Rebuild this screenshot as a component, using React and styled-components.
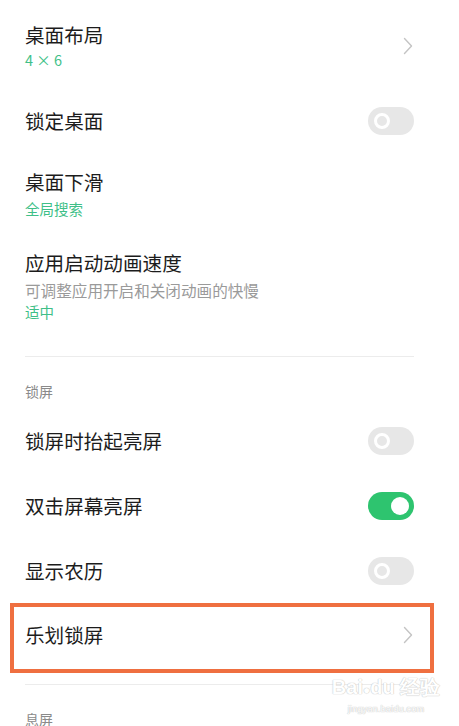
import styled, { createGlobalStyle } from "styled-components";

const GlobalStyle = createGlobalStyle`
  body{
    margin: 0;
    background: #ffffff;
    font-family: "Noto Sans CJK SC", "Noto Sans", sans-serif;
  }
`;

export default function App(){
  return(
    <Page>
      <GlobalStyle/>
      <Item $pt={21} $pb={18}>
        <Texts>
          <Title>桌面布局</Title>
          <Value $gap={1}>4 × 6</Value>
        </Texts>
        <Chevron/>
      </Item>
      <Item $h={65}>
        <Title>锁定桌面</Title>
        <Toggle/>
      </Item>
      <Item $pt={15} $pb={15}>
        <Texts>
          <Title>桌面下滑</Title>
          <Value $gap={3}>全局搜索</Value>
        </Texts>
      </Item>
      <Item $pt={15} $pb={18}>
        <Texts>
          <Title>应用启动动画速度</Title>
          <Desc>可调整应用开启和关闭动画的快慢</Desc>
          <Value $gap={1}>适中</Value>
        </Texts>
      </Item>
      <Divider $top={16} $bottom={24}/>
      <Section>锁屏</Section>
      <Item $h={65} style={{marginTop: 7}}>
        <Title>锁屏时抬起亮屏</Title>
        <Toggle/>
      </Item>
      <Item $h={65}>
        <Title>双击屏幕亮屏</Title>
        <Toggle $on/>
      </Item>
      <Item $h={65}>
        <Title>显示农历</Title>
        <Toggle/>
      </Item>
      <Item $h={64}>
        <Title>乐划锁屏</Title>
        <Chevron/>
        <Highlight/>
      </Item>
      <Divider $top={17} $bottom={24}/>
      <Section>息屏</Section>
      <Watermark>
        <Brand>Bai<Paw>●</Paw>du 经验</Brand>
        <Site>jingyan.baidu.com</Site>
      </Watermark>
    </Page>
  );
}

function Chevron(){
  return(
    <ChevronBox viewBox="0 0 10 18">
      <path d="M1.5 1.5 L8.5 9 L1.5 16.5" fill="none" stroke="#c4c4c4" strokeWidth="1.4" strokeLinecap="round" strokeLinejoin="round"/>
    </ChevronBox>
  );
}

function Toggle({ $on }){
  return(
    <Track $on={$on}>
      <Knob $on={$on}/>
    </Track>
  );
}

const Page = styled.div`
  position: relative;
  width: 459px;
  height: 726px;
  overflow: hidden;
  padding: 0 45px 0 25px;
  box-sizing: border-box;
`;
const Item = styled.div`
  position: relative;
  display: flex;
  align-items: center;
  justify-content: space-between;
  box-sizing: border-box;
  ${p => p.$h ? `height: ${p.$h}px;` : ""}
  padding-top: ${p => p.$pt || 0}px;
  padding-bottom: ${p => p.$pb || 0}px;
`;
const Texts = styled.div`
  display: flex;
  flex-direction: column;
`;
const Title = styled.div`
  font-size: 19.6px;
  line-height: 28px;
  color: #1c1c1c;
`;
const Value = styled.div`
  margin-top: ${p => p.$gap || 0}px;
  font-size: 14.5px;
  line-height: 20px;
  color: #3fbf88;
`;
const Desc = styled.div`
  margin-top: 2px;
  font-size: 15.6px;
  line-height: 22px;
  color: #9a9a9a;
`;
const Section = styled.div`
  font-size: 14px;
  line-height: 20px;
  color: #8a8a8a;
`;
const Divider = styled.div`
  height: 1px;
  background: #ececec;
  margin-top: ${p => p.$top}px;
  margin-bottom: ${p => p.$bottom}px;
`;
const ChevronBox = styled.svg`
  width: 10px;
  height: 18px;
  margin-right: 1px;
`;
const Track = styled.div`
  position: relative;
  width: 46px;
  height: 28px;
  border-radius: 14px;
  background: ${p => p.$on ? "#2ec46f" : "#e7e7e7"};
  display: flex;
  align-items: center;
  justify-content: ${p => p.$on ? "flex-end" : "flex-start"};
  padding: 0 ${p => p.$on ? 5 : 6}px;
  box-sizing: border-box;
`;
const Knob = styled.div`
  width: ${p => p.$on ? 18 : 16}px;
  height: ${p => p.$on ? 18 : 16}px;
  border-radius: 50%;
  box-sizing: border-box;
  background: ${p => p.$on ? "#ffffff" : "#e7e7e7"};
  border: ${p => p.$on ? "none" : "3.5px solid #ffffff"};
`;
const Highlight = styled.div`
  position: absolute;
  top: 0;
  bottom: -6px;
  left: -15px;
  right: -20px;
  border: 4px solid #ef6f40;
  pointer-events: none;
`;
const Watermark = styled.div`
  position: absolute;
  left: 340px;
  top: 674px;
  width: 92px;
  display: flex;
  flex-direction: column;
  align-items: center;
  color: #ffffff;
  font-family: "Liberation Sans", sans-serif;
  text-shadow: 0 0 1px #bdbdbd, 0 0 1px #bdbdbd;
  opacity: 0.9;
`;
const Brand = styled.div`
  font-size: 20px;
  line-height: 26px;
  font-weight: 700;
  white-space: nowrap;
`;
const Paw = styled.span`
  font-size: 12px;
`;
const Site = styled.div`
  font-size: 9.5px;
  line-height: 12px;
  white-space: nowrap;
`;
